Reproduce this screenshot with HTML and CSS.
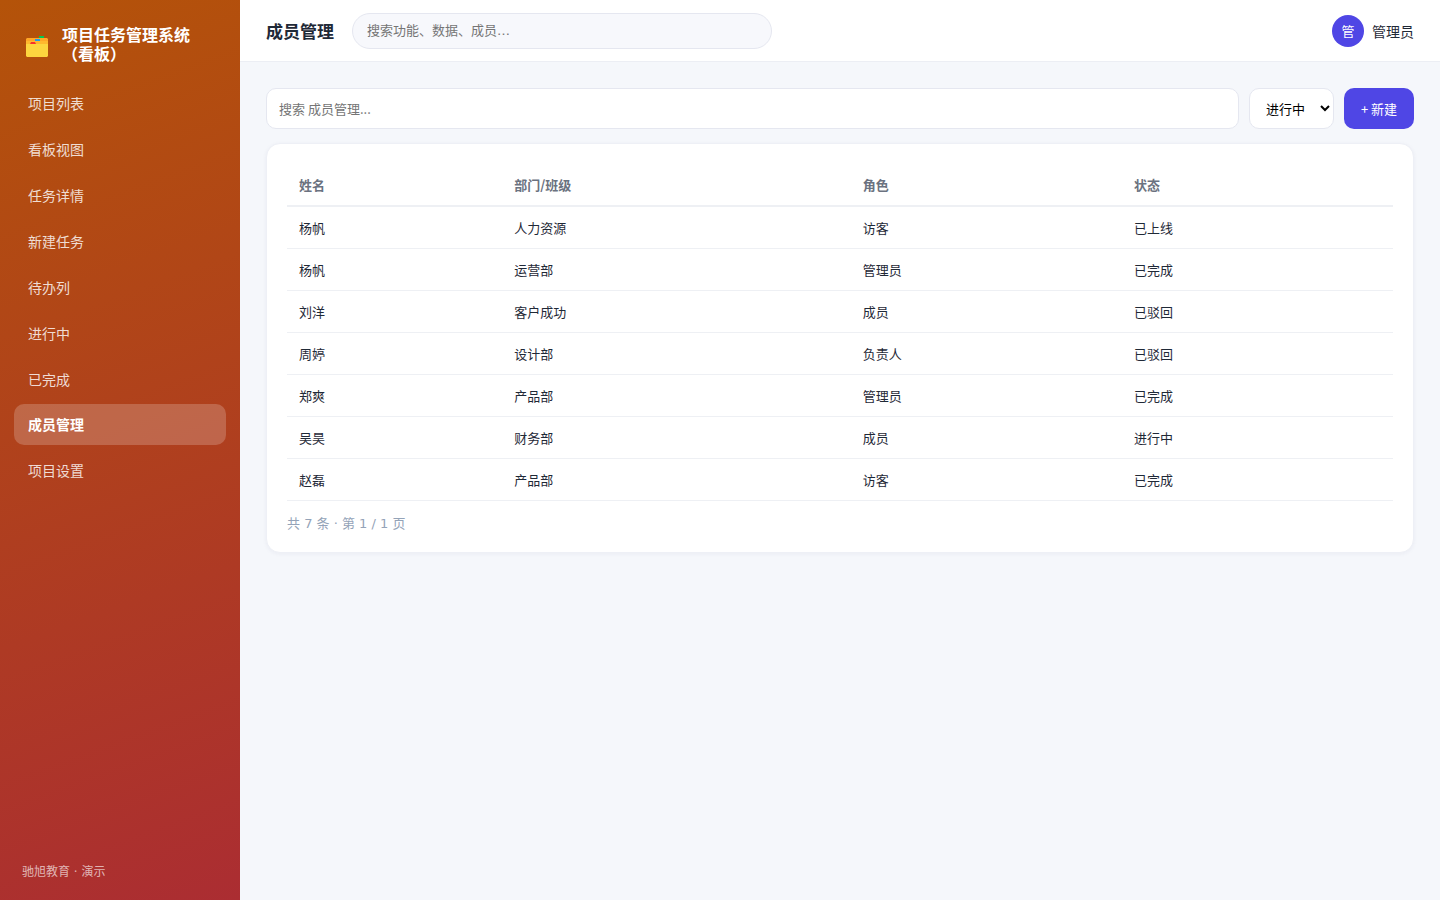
FILE: index.html
```html
<!DOCTYPE html>
<html lang="zh-CN">
<head>
    <meta charset="UTF-8">
    <meta name="viewport" content="width=device-width, initial-scale=1.0">
    <title>成员管理 - 项目任务管理系统（看板）</title>
    <link rel="stylesheet" href="styles.css">
</head>
<body>
<div class="app">
    <!-- Sidebar -->
    <aside class="sidebar">
        <div class="brand">
            <svg class="brand-icon" viewBox="0 0 22 21" aria-hidden="true">
                <path d="M13 0h5v4h-5z" fill="#00c853"/>
                <path d="M1 2h20l1 1v7H0V3z" fill="#ffa726"/>
                <path d="M13 0h5v2h-5z" fill="#00c853"/>
                <path d="M0 5h22v4H0z" fill="#ffb92e"/>
                <path d="M9 3h5v2H9z" fill="#1e9bf0"/>
                <path d="M5 6h4l1 2H4z" fill="#f9322c"/>
                <path d="M0 8h22v12l-1 1H1l-1-1z" fill="#fdd63f"/>
            </svg>
            <span class="brand-name">项目任务管理系统（看板）</span>
        </div>
        <nav class="nav">
            <a href="#">项目列表</a>
            <a href="#">看板视图</a>
            <a href="#">任务详情</a>
            <a href="#">新建任务</a>
            <a href="#">待办列</a>
            <a href="#">进行中</a>
            <a href="#">已完成</a>
            <a href="#" class="active">成员管理</a>
            <a href="#">项目设置</a>
        </nav>
        <div class="sidebar-foot">驰旭教育 · 演示</div>
    </aside>

    <div class="main">
        <!-- Top bar -->
        <header class="topbar">
            <h1>成员管理</h1>
            <input type="search" class="global-search" placeholder="搜索功能、数据、成员…" aria-label="全局搜索">
            <div class="user">
                <span class="avatar">管</span>
                <span>管理员</span>
            </div>
        </header>

        <!-- Content -->
        <main class="content">
            <div class="toolbar">
                <input type="text" class="filter-input" placeholder="搜索 成员管理..." aria-label="搜索成员">
                <select class="filter-select" aria-label="状态">
                    <option>进行中</option>
                    <option>已完成</option>
                    <option>已驳回</option>
                </select>
                <button type="button" class="btn">+ 新建</button>
            </div>

            <section class="card">
                <table>
                    <thead>
                        <tr><th>姓名</th><th>部门/班级</th><th>角色</th><th>状态</th></tr>
                    </thead>
                    <tbody>
                        <tr><td>杨帆</td><td>人力资源</td><td>访客</td><td>已上线</td></tr>
                        <tr><td>杨帆</td><td>运营部</td><td>管理员</td><td>已完成</td></tr>
                        <tr><td>刘洋</td><td>客户成功</td><td>成员</td><td>已驳回</td></tr>
                        <tr><td>周婷</td><td>设计部</td><td>负责人</td><td>已驳回</td></tr>
                        <tr><td>郑爽</td><td>产品部</td><td>管理员</td><td>已完成</td></tr>
                        <tr><td>吴昊</td><td>财务部</td><td>成员</td><td>进行中</td></tr>
                        <tr><td>赵磊</td><td>产品部</td><td>访客</td><td>已完成</td></tr>
                    </tbody>
                </table>
                <div class="pager">共 7 条 · 第 1 / 1 页</div>
            </section>
        </main>
    </div>
</div>
</body>
</html>
```
FILE: styles.css
```css
* {
    box-sizing: border-box;
}

body {
    margin: 0;
    font-family: "Noto Sans CJK SC", sans-serif;
    font-size: 14px;
    color: #1f2937;
    background: #f5f7fb;
}

input, select, button {
    font-family: inherit;
    font-size: 13px;
}

.brand-name, .sidebar-foot, .global-search, .pager {
    font-family: "DejaVu Sans", "Noto Sans CJK SC", sans-serif;
}

.app {
    display: flex;
    min-height: 100vh;
}

/* Sidebar */
.sidebar {
    display: flex;
    flex-direction: column;
    flex: 0 0 240px;
    padding: 26px 14px 19px;
    background: linear-gradient(160deg, #b45309, #ab2d32);
    color: #fff;
}

.brand {
    display: flex;
    align-items: flex-end;
    gap: 14px;
    padding: 0 12px;
    margin-bottom: 18px;
}

.brand-icon {
    flex: none;
    width: 22px;
    height: 21px;
    margin-bottom: 7px;
}

.brand-name {
    font-size: 16px;
    font-weight: 700;
    line-height: 19px;
}

.nav {
    display: flex;
    flex-direction: column;
    gap: 4px;
}

.nav a {
    padding: 11px 14px;
    border-radius: 10px;
    line-height: 20px;
    color: rgba(255, 255, 255, 0.82);
    text-decoration: none;
}

.nav a.active {
    background: rgba(255, 255, 255, 0.2);
    color: #fff;
    font-weight: 700;
    line-height: 19px;
}

.sidebar-foot {
    margin-top: auto;
    padding: 0 8px;
    font-size: 12px;
    line-height: 18px;
    color: rgba(255, 255, 255, 0.65);
}

.main {
    flex: 1;
    min-width: 0;
}

/* Top bar */
.topbar {
    display: flex;
    align-items: center;
    gap: 18px;
    height: 62px;
    padding: 0 26px;
    background: #fff;
    border-bottom: 1px solid #eceef4;
}

.topbar h1 {
    margin: 0;
    font-size: 17px;
    line-height: 24px;
}

.global-search {
    width: 420px;
    height: 36px;
    padding: 0 14px;
    border: 1px solid #e5e7f0;
    border-radius: 18px;
    background: #f7f8fc;
    appearance: none;
}

.user {
    display: flex;
    align-items: center;
    gap: 8px;
    margin-left: auto;
}

.avatar {
    display: flex;
    align-items: center;
    justify-content: center;
    width: 32px;
    height: 32px;
    border-radius: 50%;
    background: #4f46e5;
    color: #fff;
    font-size: 13px;
}

/* Content */
.content {
    padding: 26px;
}

.toolbar {
    display: flex;
    gap: 10px;
    height: 41px;
    margin-bottom: 14px;
}

.filter-input {
    flex: 1;
    min-width: 0;
    padding: 0 12px;
    border: 1px solid #e5e7f0;
    border-radius: 10px;
    background: #fff;
}

.filter-select {
    width: 85px;
    padding: 0 0 0 12px;
    border: 1px solid #e5e7f0;
    border-radius: 10px;
    background: #fff;
    color: #000;
}

.btn {
    width: 70px;
    padding: 0;
    border: none;
    border-radius: 10px;
    background: #4f46e5;
    color: #fff;
    cursor: pointer;
}

.card {
    padding: 20px 20px 19px;
    border: 1px solid #eef0f6;
    border-radius: 14px;
    background: #fff;
    box-shadow: 0 1px 4px rgba(30, 41, 90, 0.05);
}

table {
    width: 100%;
    border-collapse: collapse;
    font-size: 13px;
}

th, td {
    padding: 11px 12px;
    line-height: 19px;
    text-align: left;
    border-bottom: 1px solid #eef0f4;
}

th {
    color: #6b7280;
    border-bottom: 2px solid #eef0f4;
}

.pager {
    margin-top: 13px;
    font-size: 13px;
    line-height: 19px;
    color: #94a3b8;
}
```
